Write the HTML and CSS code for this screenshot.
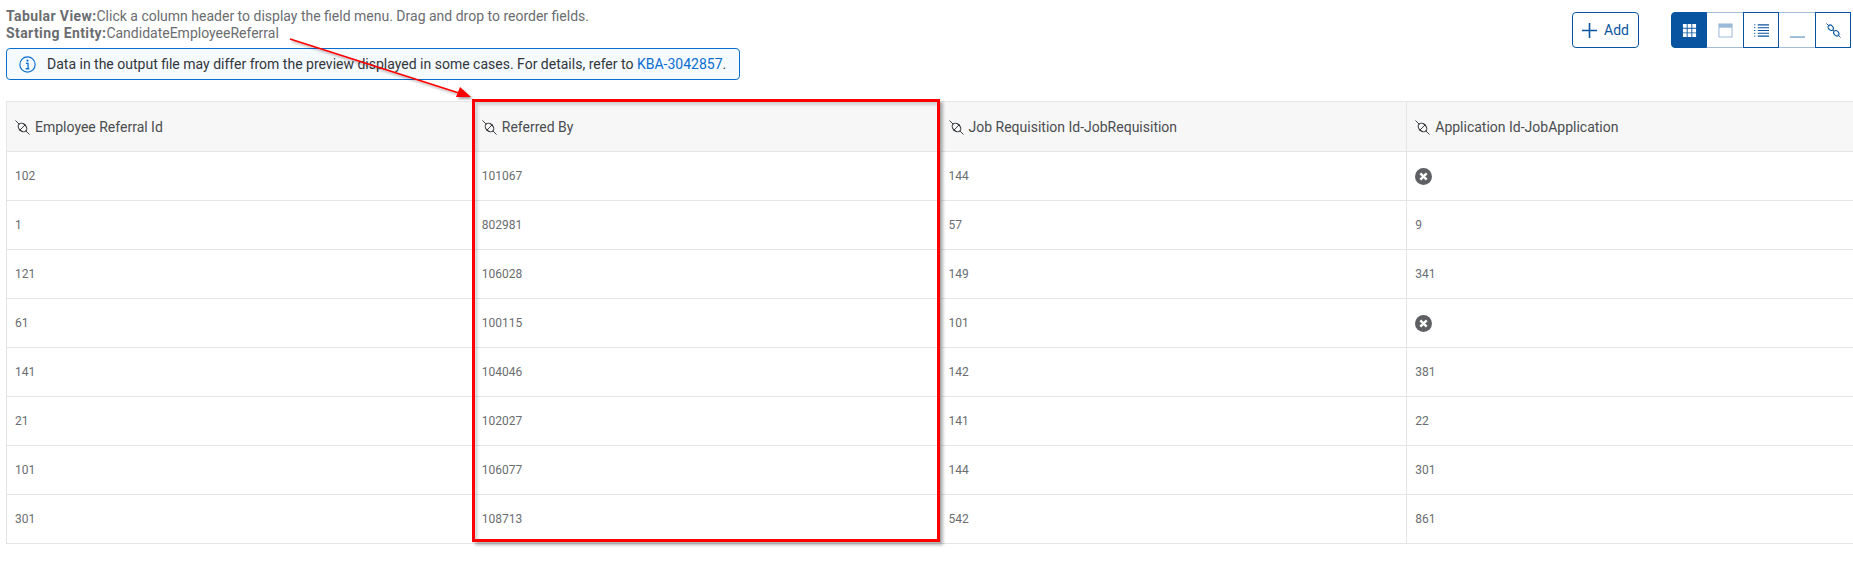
FILE: index.html
```html
<!DOCTYPE html>
<html lang="en">
<head>
<meta charset="utf-8">
<title>Tabular View</title>
<link rel="stylesheet" href="styles.css">
</head>
<body>
<svg class="sprite" width="0" height="0" aria-hidden="true">
  <symbol id="link" viewBox="0 0 16 16">
    <path d="M0.5 0.5l4 4M11.5 11.5l4 4" fill="none" stroke="currentColor" stroke-width="1"/>
    <ellipse cx="8" cy="8" rx="5.2" ry="3.8" transform="rotate(45 8 8)" fill="none" stroke="currentColor" stroke-width="1.2"/>
    <path d="M4.8 11.2l6.4-6.4" fill="none" stroke="currentColor" stroke-width="1"/>
  </symbol>
  <symbol id="chain" viewBox="0 0 16 16">
    <path d="M0.5 0.5l3 3M12.5 12.5l3 3M7.5 7.5l1 1" fill="none" stroke="currentColor" stroke-width="1"/>
    <ellipse cx="5" cy="5" rx="3.2" ry="2.4" transform="rotate(45 5 5)" fill="none" stroke="currentColor" stroke-width="1.1"/>
    <ellipse cx="11" cy="11" rx="3.2" ry="2.4" transform="rotate(45 11 11)" fill="none" stroke="currentColor" stroke-width="1.1"/>
  </symbol>
</svg>
<main class="page">
  <header class="top">
    <div class="intro">
      <p class="line"><b>Tabular View:</b>Click a column header to display the field menu. Drag and drop to reorder fields.</p>
      <p class="line"><b>Starting Entity:</b>CandidateEmployeeReferral</p>
      <div class="notice">
        <svg class="notice-icon" viewBox="0 0 16 16"><circle cx="8" cy="8" r="7.2" fill="none" stroke="#0a6ed1" stroke-width="1.1"/><path d="M6.5 7h2v5M6.3 12h3.4" fill="none" stroke="#0a6ed1" stroke-width="1.2"/><circle cx="8" cy="4.4" r="1" fill="#0a6ed1"/></svg>
        <span>Data in the output file may differ from the preview displayed in some cases. For details, refer to <a href="#">KBA-3042857</a>.</span>
      </div>
    </div>
    <div class="tools">
      <button class="add" type="button"><svg viewBox="0 0 16 16"><path d="M8 0v16M0 8h16" stroke="#0854a0" stroke-width="1.7" fill="none"/></svg>Add</button>
      <div class="seg">
        <button class="seg-btn on" type="button"><svg viewBox="0 0 16 16"><path d="M1 1h4v4H1zM6 1h4v4H6zM11 1h4v4h-4zM1 6h4v4H1zM6 6h4v4H6zM11 6h4v4h-4zM1 11h4v4H1zM6 11h4v4H6zM11 11h4v4h-4z" fill="#fff"/></svg></button>
        <button class="seg-btn off" type="button"><svg viewBox="0 0 16 16"><path d="M1 1h14v14H1z" fill="none" stroke="#0854a0" stroke-width="1.1"/><path d="M1 1h14v4H1z" fill="#0854a0"/></svg></button>
        <button class="seg-btn" type="button"><svg viewBox="0 0 16 16"><path d="M4 2h12M4 5h12M4 8h12M4 11h12M4 14h12" stroke="#0854a0" stroke-width="1.1"/><path d="M0 2h2M0 5h2M0 8h2M0 11h2M0 14h2" stroke="#0854a0" stroke-width="1" stroke-dasharray="1 .6"/></svg></button>
        <button class="seg-btn off" type="button"><svg viewBox="0 0 16 16"><path d="M0 15h16" stroke="#0854a0" stroke-width="2"/></svg></button>
        <button class="seg-btn link" type="button"><svg viewBox="0 0 16 16"><use href="#chain"/></svg></button>
      </div>
    </div>
  </header>
  <div class="table-wrap">
    <table class="grid">
      <thead>
        <tr>
          <th><svg class="th-icon" viewBox="0 0 16 16"><use href="#link"/></svg>Employee Referral Id</th>
          <th><svg class="th-icon" viewBox="0 0 16 16"><use href="#link"/></svg>Referred By</th>
          <th><svg class="th-icon" viewBox="0 0 16 16"><use href="#link"/></svg>Job Requisition Id-JobRequisition</th>
          <th><svg class="th-icon" viewBox="0 0 16 16"><use href="#link"/></svg>Application Id-JobApplication</th>
        </tr>
      </thead>
      <tbody>
        <tr><td>102</td><td>101067</td><td>144</td><td><svg class="none" viewBox="0 0 16 16"><circle cx="8" cy="8" r="8" fill="#5e6063"/><path d="M5 5l6 6M11 5l-6 6" stroke="#fff" stroke-width="2.2"/></svg></td></tr>
        <tr><td>1</td><td>802981</td><td>57</td><td>9</td></tr>
        <tr><td>121</td><td>106028</td><td>149</td><td>341</td></tr>
        <tr><td>61</td><td>100115</td><td>101</td><td><svg class="none" viewBox="0 0 16 16"><circle cx="8" cy="8" r="8" fill="#5e6063"/><path d="M5 5l6 6M11 5l-6 6" stroke="#fff" stroke-width="2.2"/></svg></td></tr>
        <tr><td>141</td><td>104046</td><td>142</td><td>381</td></tr>
        <tr><td>21</td><td>102027</td><td>141</td><td>22</td></tr>
        <tr><td>101</td><td>106077</td><td>144</td><td>301</td></tr>
        <tr><td>301</td><td>108713</td><td>542</td><td>861</td></tr>
      </tbody>
    </table>
  </div>
  <div class="callout"></div>
  <svg class="arrow" width="500" height="110" viewBox="0 0 500 110">
    <defs><filter id="sh" x="-5%" y="-20%" width="110%" height="140%"><feDropShadow dx="2" dy="2" stdDeviation="1" flood-color="#000" flood-opacity=".35"/></filter></defs>
    <g filter="url(#sh)"><path d="M290 39L462 94" stroke="#f00" stroke-width="1.6" fill="none"/><path d="M471 97L456 97L460 87z" fill="#f00"/></g>
  </svg>
</main>
</body>
</html>
```
FILE: styles.css
```css
* { box-sizing: border-box; }
html, body { margin: 0; height: 100%; }
body { background: #fff; overflow: hidden; font-family: Roboto, "Noto Sans", sans-serif; color: #6a6d70; }
.sprite { position: absolute; }
.page { position: relative; width: 1853px; height: 583px; overflow: hidden; padding: 8px 0 0 6px; }
.top { display: flex; justify-content: space-between; height: 93px; }
.intro { width: 734px; }
.line { margin: 0; height: 17px; line-height: 17px; font-size: 14px; white-space: nowrap; }
.line b { font-weight: 700; letter-spacing: .4px; }
.notice { margin-top: 6px; height: 32px; width: 734px; display: flex; align-items: center; gap: 11px; padding-left: 12px; background: #f5faff; border: 1px solid #0a6ed1; border-radius: 4px; font-size: 14px; color: #32363a; white-space: nowrap; }
.notice-icon { width: 17px; height: 17px; flex: none; }
.notice a { color: #0a6ed1; text-decoration: none; }
.tools { display: flex; gap: 32px; padding: 4px 2px 0 0; height: 40px; }
.add { width: 67px; height: 36px; display: flex; align-items: center; justify-content: center; gap: 7px; padding: 0; background: #fff; border: 1px solid #0854a0; border-radius: 4px; color: #0854a0; font: 14px Roboto, sans-serif; }
.add svg { width: 15px; height: 15px; }
.seg { display: flex; }
.seg-btn { width: 36px; height: 36px; display: flex; align-items: center; justify-content: center; padding: 0; background: #fff; border: 1px solid #0854a0; }
.seg-btn svg { width: 15px; height: 15px; }
.seg-btn.on { background: #0854a0; border-radius: 4px 0 0 4px; }
.seg-btn.off { border-color: #a3bdd8; border-left: 0; border-right: 0; }
.seg-btn.off svg { opacity: .4; }
.seg-btn.link { color: #0854a0; }
.table-wrap { width: 1847px; overflow: hidden; }
.grid { width: 1868px; table-layout: fixed; border-collapse: collapse; }
.grid th, .grid td { border: 1px solid #e5e5e5; text-align: left; padding: 0 0 0 8px; }
.grid th { height: 50px; background: #f7f7f7; font-weight: 400; font-size: 14px; color: #4a4d50; white-space: nowrap; }
.grid td { height: 49px; font-size: 12px; color: #6a6d70; }
.th-icon { width: 15px; height: 15px; margin-right: 5px; color: #32363a; vertical-align: -3px; }
.none { width: 17px; height: 17px; display: block; }
.callout { position: absolute; left: 472px; top: 99px; width: 468px; height: 443px; border: 3px solid #f00; box-shadow: 3px 3px 3px rgba(0,0,0,.3), inset 3px 3px 3px rgba(0,0,0,.15); }
.arrow { position: absolute; left: 0; top: 0; }
```
